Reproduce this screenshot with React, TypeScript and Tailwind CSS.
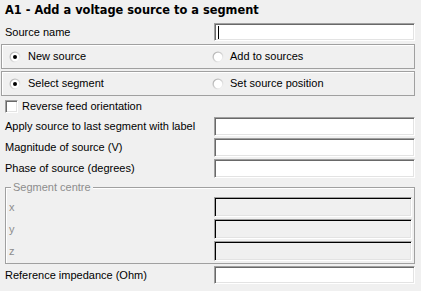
import React from "react"

const font = { fontFamily: '"Liberation Sans", Arial, sans-serif' }
const titleFont = { fontFamily: '"DejaVu Sans", Verdana, sans-serif' }

function TextBox({ caret = false }: { caret?: boolean }) {
  return (
    <div className="h-full w-[201px] bg-white border border-t-[#a0a0a0] border-l-[#a0a0a0] border-b-white border-r-white shadow-[inset_1px_1px_0_#696969,inset_-1px_-1px_0_#e3e3e3] flex items-center">
      {caret && <div className="ml-[3px] w-px h-[13px] bg-black" />}
    </div>
  )
}

function DisabledBox() {
  return (
    <div className="h-full w-[198px] bg-[#f0f0f0] border border-t-[#a0a0a0] border-l-[#a0a0a0] border-b-white border-r-white shadow-[inset_1px_1px_0_#000,inset_-1px_-1px_0_#e3e3e3]" />
  )
}

function Radio({ checked }: { checked: boolean }) {
  return (
    <svg width="12" height="12" viewBox="0 0 12 12" className="shrink-0">
      <defs>
        <linearGradient id="rg" x1="0" y1="0" x2="1" y2="1">
          <stop offset="0" stopColor="#a8a8a8" />
          <stop offset="1" stopColor="#ffffff" />
        </linearGradient>
      </defs>
      <circle cx="6" cy="6" r="5.5" fill="url(#rg)" />
      <circle cx="6" cy="6" r="4.2" fill="#ffffff" />
      {checked && <circle cx="6" cy="6" r="2" fill="#000" />}
    </svg>
  )
}

function Row({ label, children, h = "h-[19px]", className = "" }: { label: string; children: React.ReactNode; h?: string; className?: string }) {
  return (
    <div className={`flex items-center ${h} ${className}`}>
      <div className="w-[214px] pl-[5px]">{label}</div>
      {children}
    </div>
  )
}

export default function App() {
  return (
    <div className="w-[421px] h-[291px] bg-[#f0f0f0] text-[11px] text-black overflow-hidden" style={font}>
      <div className="h-[23px] flex items-center pl-[5px] pb-[1px] font-bold text-[11.4px]" style={titleFont}>
        A1 - Add a voltage source to a segment
      </div>

      <Row label="Source name" h="h-[18px]">
        <TextBox caret />
      </Row>

      <div className="ml-[1px] mt-[3px] w-[414px] h-[25px] border border-[#a0a0a0] shadow-[inset_1px_1px_0_#fff] flex items-center">
        <div className="w-[210px] flex items-center gap-[7px] pl-[7px]">
          <Radio checked />
          <span>New source</span>
        </div>
        <div className="flex items-center gap-[6px]">
          <Radio checked={false} />
          <span>Add to sources</span>
        </div>
      </div>

      <div className="ml-[1px] mt-[2px] w-[414px] h-[25px] border border-[#a0a0a0] shadow-[inset_1px_1px_0_#fff] flex items-center">
        <div className="w-[210px] flex items-center gap-[7px] pl-[7px]">
          <Radio checked />
          <span>Select segment</span>
        </div>
        <div className="flex items-center gap-[6px]">
          <Radio checked={false} />
          <span>Set source position</span>
        </div>
      </div>

      <div className="h-[21px] flex items-center pl-[5px] gap-[4px]">
        <div className="w-[13px] h-[13px] bg-white border border-t-[#a0a0a0] border-l-[#a0a0a0] border-b-white border-r-white shadow-[inset_1px_1px_0_#696969,inset_-1px_-1px_0_#e3e3e3]" />
        <span>Reverse feed orientation</span>
      </div>

      <div className="flex flex-col gap-[2px]">
        <Row label="Apply source to last segment with label">
          <TextBox />
        </Row>
        <Row label="Magnitude of source (V)">
          <TextBox />
        </Row>
        <Row label="Phase of source (degrees)">
          <TextBox />
        </Row>
      </div>

      <fieldset className="relative ml-[5px] mt-[9px] w-[410px] h-[77px] border border-[#a0a0a0] shadow-[inset_1px_1px_0_#fff] pt-[9px] pb-[1px] flex flex-col gap-[2px]">
        <div className="absolute -top-[7px] left-[5px] px-[2px] bg-[#f0f0f0] text-[#8d8d8d] leading-[13px]">Segment centre</div>
        {["x", "y", "z"].map((l) => (
          <div key={l} className="flex items-center h-[20px]">
            <div className="w-[208px] pl-[3px] text-[#8d8d8d]">{l}</div>
            <DisabledBox />
          </div>
        ))}
      </fieldset>

      <Row label="Reference impedance (Ohm)" h="h-[18px]" className="mt-[2px]">
        <TextBox />
      </Row>
    </div>
  )
}
